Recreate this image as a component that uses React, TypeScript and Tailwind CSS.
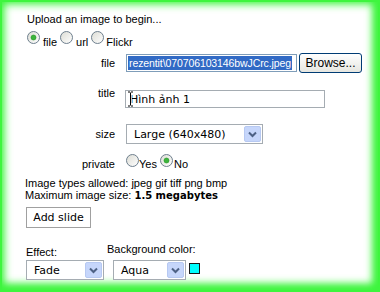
import { useId } from "react";

const Radio = ({ checked = false }: { checked?: boolean }) => {
  const id = useId();
  return (
    <svg width="13" height="13" viewBox="0 0 13 13" className="shrink-0">
      <defs>
        <linearGradient id={id} x1="0" y1="0" x2="1" y2="1">
          <stop offset="0" stopColor="#dcdcd4" />
          <stop offset="1" stopColor="#ffffff" />
        </linearGradient>
      </defs>
      <circle cx="6.5" cy="6.5" r="6" fill={`url(#${id})`} stroke="#6e7f8e" strokeWidth="1" />
      {checked && <circle cx="6.5" cy="6.5" r="2.5" fill="#3cb43c" stroke="#1f941f" strokeWidth="0.6" />}
    </svg>
  );
};

const Chevron = () => (
  <div className="ml-auto mr-[1px] w-[17px] h-[16px] rounded-[2px] bg-[#c6d6fb] border border-[#b7c9f2] flex items-center justify-center">
    <svg width="9" height="7" viewBox="0 0 9 7">
      <path d="M1 1.5l3.5 3.5L8 1.5" fill="none" stroke="#4d6185" strokeWidth="2" />
    </svg>
  </div>
);

const Select = ({ value, className }: { value: string; className: string }) => (
  <div className={`flex items-center h-[20px] border border-[#a5acb2] bg-white pl-[7px] ${className}`}>
    <span className="font-['DejaVu_Sans',sans-serif] text-[11px] leading-[13px] text-black whitespace-nowrap">
      {value}
    </span>
    <Chevron />
  </div>
);

const IBeam = () => (
  <svg width="7" height="16" viewBox="0 0 7 16" className="absolute left-[1px] top-[0px]">
    <path d="M1 1h2M4 1h2M3.5 1.5v13M1 15h2M4 15h2" fill="none" stroke="#fff" strokeWidth="2.4" />
    <path d="M1 1h2M4 1h2M3.5 1.5v13M1 15h2M4 15h2" fill="none" stroke="#000" strokeWidth="1" />
  </svg>
);

export default function App() {
  return (
    <div className="w-[380px] h-[292px] bg-white overflow-hidden font-['Liberation_Sans',Arial,sans-serif] text-[11px] leading-[13px] text-black shadow-[inset_0_0_0_2px_#3ef53e,inset_0_0_8px_4px_#3ef53e,inset_-4px_-5px_8px_3px_#3ef53e]">
      <div className="pl-[27px] pt-[13px]">
        <p>Upload an image to begin...</p>

        {/* source */}
        <div className="flex items-start mt-[5px] h-[18px]">
          <Radio checked />
          <span className="ml-[3px] mt-[5px]">file</span>
          <span className="ml-[3px]"><Radio /></span>
          <span className="ml-[3px] mt-[5px]">url</span>
          <span className="ml-[3px]"><Radio /></span>
          <span className="ml-[2px] mt-[5px]">Flickr</span>
        </div>
      </div>

      <div className="grid grid-cols-[88px_1fr] gap-x-[11px] pl-[27px] mt-[4px]">
        {/* file */}
        <div className="flex items-center justify-end h-[20px]">file</div>
        <div className="flex items-center h-[20px]">
          <div className="w-[171px] h-[18px] border border-[#7f9db9] bg-white overflow-hidden flex items-center pl-[1px]">
            <span className="whitespace-nowrap bg-[#316ac5] text-white text-[10.5px] tracking-[-0.1px] leading-[14px] px-[1px]">
              rezentit\070706103146bwJCrc.jpeg
            </span>
          </div>
          <button className="ml-[2px] w-[63px] h-[20px] rounded-[3px] border border-[#003c74] bg-gradient-to-b from-white to-[#e6e6e0] text-[12px] leading-[14px] mt-[-1px]">
            Browse...
          </button>
        </div>

        {/* title */}
        <div className="flex justify-end h-[19px] mt-[17px]">
          <span className="mt-[-3px]">title</span>
        </div>
        <div className="mt-[17px] ml-[-1px]">
          <div className="relative w-[200px] h-[18px] border border-[#a5acb2] bg-white flex items-center pl-[4px]">
            <IBeam />
            <span className="font-['DejaVu_Sans',sans-serif] text-[11px]">Hình ảnh 1</span>
          </div>
        </div>

        {/* size */}
        <div className="flex items-center justify-end h-[20px] mt-[15px]">size</div>
        <div className="mt-[15px]">
          <Select value="Large (640x480)" className="w-[137px]" />
        </div>

        {/* private */}
        <div className="flex items-start justify-end h-[17px] mt-[10px]">
          <span className="mt-[4px]">private</span>
        </div>
        <div className="flex items-start h-[17px] mt-[10px]">
          <Radio />
          <span className="mt-[4px]">Yes</span>
          <span className="ml-[3px]"><Radio checked /></span>
          <span className="ml-[1px] mt-[4px]">No</span>
        </div>
      </div>

      <div className="pl-[25px] mt-[6px] leading-[12px]">
        <p>Image types allowed: jpeg gif tiff png bmp</p>
        <p>
          Maximum image size:{" "}
          <b className="font-['DejaVu_Sans',sans-serif] text-[10px]">1.5 megabytes</b>
        </p>

        <button className="mt-[5px] ml-[1px] w-[65px] h-[21px] border border-[#a0a0a0] bg-white font-['DejaVu_Sans',sans-serif] text-[11px] leading-[13px]">
          Add slide
        </button>

        <div className="flex mt-[15px] ml-[1px] gap-[9px]">
          <div className="flex flex-col">
            <span className="leading-[13px] mt-[3px]">Effect:</span>
            <Select value="Fade" className="w-[78px] mt-[1px]" />
          </div>
          <div className="flex flex-col">
            <span className="leading-[13px] ml-[-6px]">Background color:</span>
            <div className="flex items-center mt-[4px]">
              <Select value="Aqua" className="w-[73px] pl-[5px]" />
              <div className="ml-[3px] mb-[4px] w-[11px] h-[11px] bg-[#00ffff] border border-[#1a1a1a]" />
            </div>
          </div>
        </div>
      </div>
    </div>
  );
}
